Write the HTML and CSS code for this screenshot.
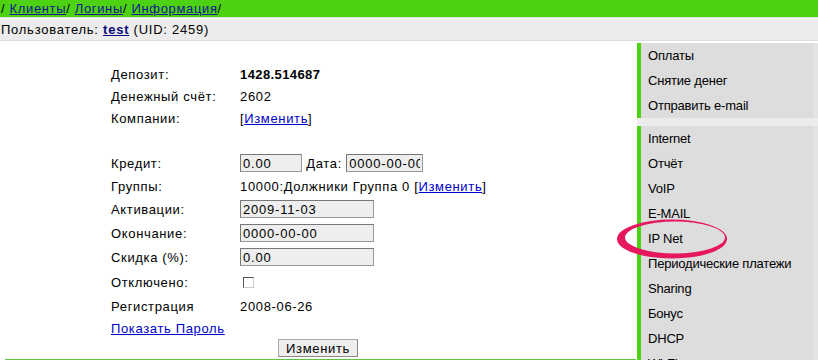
FILE: index.html
```html
<!DOCTYPE html>
<html lang="ru">
<head>
	<meta charset="UTF-8">
	<title>Информация</title>
	<link rel="stylesheet" href="styles.css">
</head>
<body>
	<div class="topbar">/ <a href="#">Клиенты</a>/ <a href="#">Логины</a>/ <a href="#">Информация</a>/</div>
	<div class="userbar">Пользователь: <a class="user" href="#">test</a> (UID: 2459)</div>

	<div class="page">
		<div class="main">
			<div class="form">
				<div class="row"><span class="label">Депозит:</span><b>1428.514687</b></div>
				<div class="row"><span class="label">Денежный счёт:</span><span>2602</span></div>
				<div class="row"><span class="label">Компании:</span><span>[<a href="#">Изменить</a>]</span></div>
				<div class="row"></div>
				<div class="row tall"><span class="label">Кредит:</span><span><input class="inp short" value="0.00"> Дата: <input class="inp date" value="0000-00-00"></span></div>
				<div class="row"><span class="label">Группы:</span><span>10000:Должники Группа 0 [<a href="#">Изменить</a>]</span></div>
				<div class="row tall"><span class="label">Активации:</span><input class="inp" value="2009-11-03"></div>
				<div class="row tall"><span class="label">Окончание:</span><input class="inp" value="0000-00-00"></div>
				<div class="row tall"><span class="label">Скидка (%):</span><input class="inp" value="0.00"></div>
				<div class="row check"><span class="label">Отключено:</span><span class="box"></span></div>
				<div class="row"><span class="label">Регистрация</span><span>2008-06-26</span></div>
				<div class="row"><a href="#">Показать Пароль</a></div>
				<div class="submit"><button>Изменить</button></div>
			</div>
			<div class="footline"></div>
		</div>

		<div class="menu">
			<ul class="group">
				<li>Оплаты</li>
				<li>Снятие денег</li>
				<li>Отправить e-mail</li>
			</ul>
			<div class="sep"></div>
			<ul class="group">
				<li>Internet</li>
				<li>Отчёт</li>
				<li>VoIP</li>
				<li>E-MAIL</li>
				<li>IP Net</li>
				<li>Периодические платежи</li>
				<li>Sharing</li>
				<li>Бонус</li>
				<li>DHCP</li>
				<li>Wi-Fi</li>
			</ul>
		</div>
	</div>

	<!-- пометка поверх меню -->
	<svg class="mark" width="818" height="360" viewBox="0 0 818 360">
		<path fill-rule="evenodd" fill="#e6175f" d="M617 239a55 19.5 0 1 0 110 0a55 19.5 0 1 0 -110 0z M625 237.5a50 16 0 1 0 100 0a50 16 0 1 0 -100 0z"/>
	</svg>
</body>
</html>
```

FILE: styles.css
```css
html,body{margin:0;padding:0;}
body{
	font-family:"Liberation Sans",Arial,sans-serif;
	font-size:13px;
	letter-spacing:0.65px;
	color:#000;
	background:#fff;
	width:818px;
	height:360px;
	overflow:hidden;
	position:relative;
}
a{color:#0000cc;}
.topbar{
	height:17px;
	line-height:17px;
	background-color:#4cd211;
	padding-left:1px;
	border-bottom:1px solid #dcdcdc;
}
.topbar a{color:#16168f;}
.userbar{
	margin-top:1px;
	height:21px;
	line-height:22px;
	padding-left:1px;
	background-color:#ececec;
	border-bottom:1px solid #dedede;
	letter-spacing:0.75px;
}
.user{color:#0a0a80;font-weight:bold;}

.page{display:flex;margin-top:2px;}
.main{width:632px;padding-left:5px;}
.form{width:414px;margin-left:106px;padding-top:20px;}
.row{display:flex;align-items:center;height:22px;}
.row.tall{height:24px;}
.row.check{height:26px;}
.label{width:129px;flex:none;}
b{letter-spacing:0.4px;}

.inp{
	box-sizing:border-box;
	width:134px;
	height:18px;
	margin:0;
	padding:0 2px;
	font:13px "Liberation Sans",Arial,sans-serif;
	letter-spacing:0.8px;
	color:#000;
	background-color:#eeeeee;
	border:1px solid #999;
	border-top-color:#777;
	border-left-color:#777;
	outline:none;
}
.inp.short{width:62px;}
.inp.date{width:77px;}
.box{
	width:9px;
	height:9px;
	margin-left:3px;
	background:#fff;
	border:1px solid #ccc;
	border-top-color:#555;
	border-left-color:#555;
}
.submit{text-align:center;height:20px;}
.submit button{
	width:80px;
	height:18px;
	padding:0;
	font:13px "Liberation Sans",Arial,sans-serif;
	letter-spacing:0.65px;
	color:#000;
	background-color:#eeeeee;
	border:1px solid #aaa;
	border-right-color:#888;
	border-bottom-color:#888;
}
.footline{height:2px;background-color:#5ec43c;margin-right:1px;}

.menu{width:181px;}
.group{
	margin:0;
	padding:0;
	list-style:none;
	letter-spacing:-0.2px;
	border-left:4px solid #4cd211;
	border-right:5px solid #e4e4e4;
	background-color:#dddddd;
}
.group li{height:25px;line-height:26px;padding-left:7px;white-space:nowrap;}
.sep{height:8px;background-color:#ececec;}

.mark{position:absolute;left:0;top:0;pointer-events:none;}
```
